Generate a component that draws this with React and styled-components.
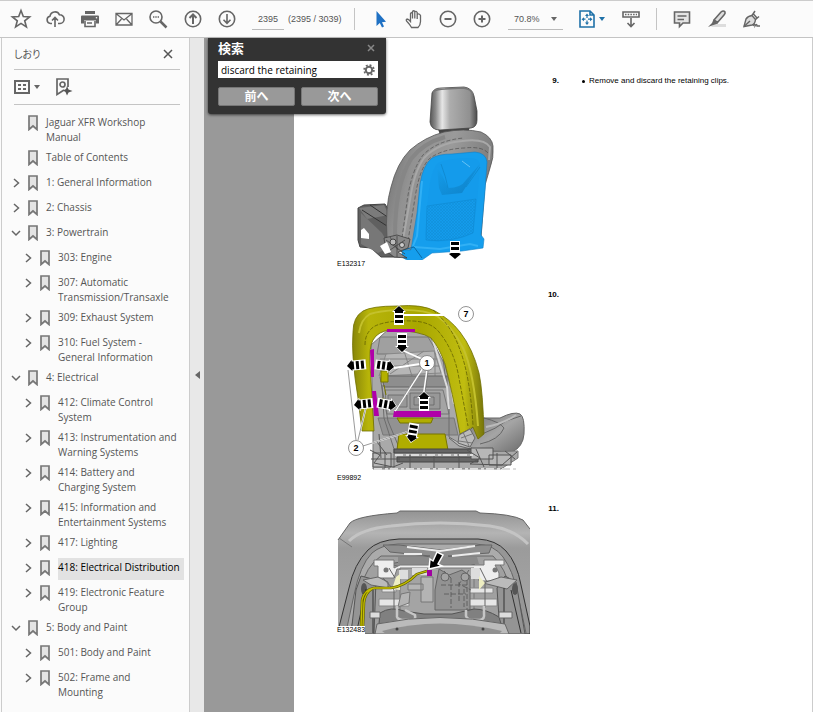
import { useState } from "react";
import styled, { createGlobalStyle, css } from "styled-components";

const bookmarks = [
  { label: "Jaguar XFR Workshop\nManual", level: 0 },
  { label: "Table of Contents", level: 0 },
  { label: "1: General Information", level: 0, state: "closed" },
  { label: "2: Chassis", level: 0, state: "closed" },
  { label: "3: Powertrain", level: 0, state: "open" },
  { label: "303: Engine", level: 1, state: "closed" },
  { label: "307: Automatic\nTransmission/Transaxle", level: 1, state: "closed" },
  { label: "309: Exhaust System", level: 1, state: "closed" },
  { label: "310: Fuel System -\nGeneral Information", level: 1, state: "closed" },
  { label: "4: Electrical", level: 0, state: "open" },
  { label: "412: Climate Control\nSystem", level: 1, state: "closed" },
  { label: "413: Instrumentation and\nWarning Systems", level: 1, state: "closed" },
  { label: "414: Battery and\nCharging System", level: 1, state: "closed" },
  { label: "415: Information and\nEntertainment Systems", level: 1, state: "closed" },
  { label: "417: Lighting", level: 1, state: "closed" },
  { label: "418: Electrical Distribution", level: 1, state: "closed", selected: true },
  { label: "419: Electronic Feature\nGroup", level: 1, state: "closed" },
  { label: "5: Body and Paint", level: 0, state: "open" },
  { label: "501: Body and Paint", level: 1, state: "closed" },
  { label: "502: Frame and\nMounting", level: 1, state: "closed" },
];

export default function App() {
  return (
    <>
      <GlobalStyle />
      <Window>
        <Toolbar />
        <Workspace>
          <Sidebar />
          <Splitter type="button" aria-label="Collapse panel">
            <svg width="5" height="8">
              <path d="M5 0V8L0 4Z" fill="#666" />
            </svg>
          </Splitter>
          <Viewer>
            <SearchPanel />
            <Page>
              <Step>
                <Figure>
                  <SeatRear />
                  <Caption>E132317</Caption>
                </Figure>
                <StepNumber>9.</StepNumber>
                <StepText>
                  <li>Remove and discard the retaining clips.</li>
                </StepText>
              </Step>
              <Step>
                <Figure>
                  <SeatFrame />
                  <Caption>E99892</Caption>
                </Figure>
                <StepNumber>10.</StepNumber>
              </Step>
              <Step>
                <Figure>
                  <SeatConnector />
                  <Caption $overlay>E132483</Caption>
                </Figure>
                <StepNumber>11.</StepNumber>
              </Step>
            </Page>
          </Viewer>
        </Workspace>
      </Window>
    </>
  );
}

function Toolbar() {
  const [page, setPage] = useState("2395");

  return (
    <Bar>
      <FileTools>
        <IconButton aria-label="Star">
          <Icon>
            <path d="M12 3.5L14.3 9.6L20.6 9.9L15.7 13.8L17.4 20L12 16.4L6.6 20L8.3 13.8L3.4 9.9L9.7 9.6Z" />
          </Icon>
        </IconButton>
        <IconButton aria-label="Upload">
          <Icon>
            <path d="M9 16.5H7.5A3.7 3.7 0 0 1 7 9.2A5 5 0 0 1 16.5 7.8A4.3 4.3 0 0 1 17 16.5H15M12 20V11M9 13.5L12 10.5L15 13.5" />
          </Icon>
        </IconButton>
        <IconButton aria-label="Print">
          <Icon>
            <path d="M7 4H17V7H7Z" fill="#666" stroke="none" />
            <path d="M4 8.5H20Q21 8.5 21 9.5V16.5H18V13.5H6V16.5H3V9.5Q3 8.5 4 8.5Z" fill="#666" stroke="none" />
            <path d="M7 14V19.5H17V14M9 16H14" />
            <circle cx="18.5" cy="10.7" r=".8" fill="#fff" stroke="none" />
          </Icon>
        </IconButton>
        <IconButton aria-label="Mail">
          <Icon>
            <path d="M4 6.5H20V18H4ZM4.500 7L12 13L19.500 7M4.500 17.500L9.500 12M19.500 17.500L14.500 12" strokeWidth="1.3" />
          </Icon>
        </IconButton>
        <IconButton aria-label="Find">
          <Icon>
            <circle cx="10" cy="10" r="6" />
            <path d="M14.500 14.500L20.500 20.500" strokeWidth="2.500" />
            <path d="M7 10H13" strokeDasharray="1.400 .9" />
          </Icon>
        </IconButton>
        <IconButton aria-label="Previous page">
          <Icon>
            <circle cx="12" cy="12" r="7.700" />
            <path d="M12 17V8M8.500 11L12 7.500L15.500 11" strokeWidth="2" />
          </Icon>
        </IconButton>
        <IconButton aria-label="Next page">
          <Icon>
            <circle cx="12" cy="12" r="7.700" />
            <path d="M12 7V16M8.500 12.800L12 16.300L15.500 12.800" />
          </Icon>
        </IconButton>
      </FileTools>
      <PageInput aria-label="Page number" value={page} onChange={(e) => setPage(e.target.value)} />
      <PageCount>(2395 / 3039)</PageCount>
      <Divider />
      <ViewTools>
        <IconButton aria-label="Select">
          <Icon>
            <path d="M8.500 4V19L11.800 16L14 20.500L16 19.500L14 15.200L18 14.800Z" fill="#1f71c4" stroke="none" />
          </Icon>
        </IconButton>
        <IconButton aria-label="Hand">
          <Icon>
            <path
              d="M9.500 20.500Q7.500 17 5 14.500Q3.500 12.500 5 12Q6.500 12 8.500 14.500V6.500Q9.500 5 10.500 6.500V11.500V4.500Q11.700 3 12.800 4.500V11.500V5Q14 3.500 15.200 5.500V12V7.500Q17 6 18.500 8.500V14.500Q18.500 18 16 20.500Z"
              strokeWidth="1.300"
            />
          </Icon>
        </IconButton>
        <IconButton aria-label="Zoom out">
          <Icon>
            <circle cx="12" cy="12" r="7.700" />
            <path d="M8.500 12H15.500" strokeWidth="2" />
          </Icon>
        </IconButton>
        <IconButton aria-label="Zoom in">
          <Icon>
            <circle cx="12" cy="12" r="7.700" />
            <path d="M8.500 12H15.500M12 8.500V15.500" strokeWidth="2" />
          </Icon>
        </IconButton>
      </ViewTools>
      <ZoomBox>
        <ZoomSelect aria-label="Zoom" defaultValue="70.8%">
          <option>70.8%</option>
          <option>100%</option>
        </ZoomSelect>
        <Caret />
      </ZoomBox>
      <FitButton aria-label="Fit page">
        <Icon $color="#1f71a8">
          <path d="M5 4H15L19 8V20H5ZM15 4V8H19" />
          <path d="M12 8.500V16M8 12.200H16" strokeWidth="1.200" strokeDasharray="2.500 2.500" />
          <path d="M12 6.500L14 9H10ZM12 18L14 15.500H10ZM6.500 12.200L9 10.200V14.200ZM17.500 12.200L15 10.200V14.200Z" fill="#1f71a8" stroke="none" />
        </Icon>
        <Caret $color="#1f71a8" />
      </FitButton>
      <IconButton aria-label="Scrolling">
        <Icon>
          <path d="M4 5H20V10H4Z" />
          <path d="M6 7.500H18" strokeDasharray="1.500 1.200" />
          <path d="M12 11V19.500M8.500 16L12 19.500L15.500 16" />
        </Icon>
      </IconButton>
      <Divider />
      <MarkupTools>
        <IconButton aria-label="Comment">
          <Icon>
            <path d="M4.500 5H19.500V16H13L9.500 19.500V16H4.500Z" fill="#e4e4e4" />
            <path d="M7.500 9H16.500M7.500 12.500H14" />
          </Icon>
        </IconButton>
        <IconButton aria-label="Highlight">
          <Icon>
            <path d="M9 17H21V20H6Z" fill="#ddd" stroke="none" />
            <path d="M9 13L16 5Q18.500 3 20 5Q20.500 6.500 19 8L12.500 15.500Z" fill="#ddd" />
            <path d="M8.500 12.500L13 16.500L8.500 18L3 20L7 16Z" fill="#666" stroke="none" />
          </Icon>
        </IconButton>
        <IconButton aria-label="Sign">
          <Icon>
            <path d="M4 19.500L6 12Q8 9 12 8.500L15.500 12.500Q15 17 12 18Z" fill="#ddd" strokeWidth="1.400" />
            <path d="M4 19.500L10 14M12 8.500L15 4M15.500 12.500L19 9.500M13 6.500L17 11" strokeWidth="1.500" />
            <path d="M13 19Q15 15 15 19Q17 16 17 19H20" strokeWidth="1.300" />
          </Icon>
        </IconButton>
      </MarkupTools>
    </Bar>
  );
}

function Sidebar() {
  return (
    <Panel>
      <PanelHeader>
        <PanelTitle>しおり</PanelTitle>
        <PlainButton aria-label="Close panel">
          <svg width="10" height="10" stroke="#555" strokeWidth="1.500">
            <path d="M1 1L9 9M9 1L1 9" />
          </svg>
        </PlainButton>
      </PanelHeader>
      <PanelTools>
        <PlainButton aria-label="Options">
          <svg width="16" height="14" fill="none" stroke="#666" strokeWidth="2">
            <path d="M1 1H15V13H1Z" />
            <path d="M4 5H7M9 5H12M4 9H7M9 9H12" />
          </svg>
          <Caret />
        </PlainButton>
        <PlainButton aria-label="Find bookmark">
          <svg width="17" height="18" fill="none" stroke="#666" strokeWidth="1.700">
            <path d="M8 12L1 16.500V1H12V9" />
            <circle cx="6.500" cy="6.500" r="2.500" />
            <path d="M11 8L12.500 11.500L16.500 13L12.500 14.500L11 17.500L9.500 14L7 12.500L10 11Z" fill="#555" stroke="none" />
          </svg>
        </PlainButton>
      </PanelTools>
      <Tree>
        {bookmarks.map((item) => (
          <TreeRow key={item.label} $level={item.level}>
            {item.state ? (
              <Toggle aria-label={item.state === "open" ? "Collapse" : "Expand"}>
                <svg width="10" height="12" fill="none" stroke="#666" strokeWidth="1.500">
                  <path d={item.state === "open" ? "M1 4L5 8L9 4" : "M3 2L7.500 6L3 10"} />
                </svg>
              </Toggle>
            ) : (
              <span />
            )}
            <svg width="10" height="16" fill="#e4e4e4" stroke="#777" strokeWidth="1.700">
              <path d="M1 1H9V14.500L5 11L1 14.500Z" />
            </svg>
            <TreeLink href="#" $selected={item.selected}>
              {item.label}
            </TreeLink>
          </TreeRow>
        ))}
      </Tree>
    </Panel>
  );
}

function SearchPanel() {
  const [query, setQuery] = useState("discard the retaining");

  return (
    <SearchBox>
      <SearchHeader>
        <label htmlFor="query">検索</label>
        <PlainButton type="button" aria-label="Close search">
          <svg width="8" height="8" stroke="#888" strokeWidth="1.500">
            <path d="M1 1L7 7M7 1L1 7" />
          </svg>
        </PlainButton>
      </SearchHeader>
      <SearchField>
        <input id="query" value={query} onChange={(e) => setQuery(e.target.value)} />
        <PlainButton type="button" aria-label="Search options">
          <svg width="12" height="12" fill="none" stroke="#666">
            <circle cx="6" cy="6" r="3.200" strokeWidth="2" />
            <circle cx="6" cy="6" r="4.900" strokeWidth="1.700" strokeDasharray="1.900 1.950" />
          </svg>
        </PlainButton>
      </SearchField>
      <SearchActions>
        <SearchButton>前へ</SearchButton>
        <SearchButton>次へ</SearchButton>
      </SearchActions>
    </SearchBox>
  );
}

function Caret({ $color = "#666" }) {
  return (
    <svg width="6" height="4">
      <path d="M0 0H6L3 4Z" fill={$color} />
    </svg>
  );
}

// Arrow pointing up with its tip at x,y and three bars behind it
function BarArrow({ x, y, turn = 0 }) {
  return (
    <g transform={`translate(${x} ${y}) rotate(${turn})`}>
      <path d="M0 -1L7 6H5V19H-5V6H-7Z" fill="#fff" />
      <path d="M0 0L5.500 5H4V7H-4V5H-5.500ZM-4 9H4V12H-4ZM-4 14H4V17H-4Z" fill="#000" />
    </g>
  );
}

function Callout({ x, y, children }) {
  return (
    <g>
      <circle cx={x} cy={y} r="7.500" fill="#fff" stroke="#777" strokeWidth=".8" />
      <text x={x} y={y + 3} textAnchor="middle" fontFamily="Liberation Sans, sans-serif" fontSize="9" fontWeight="bold">
        {children}
      </text>
    </g>
  );
}

function SeatRear() {
  return (
    <svg width="193" height="187" viewBox="337 73 193 187">
      <defs>
        <linearGradient id="rest">
          <stop offset="0" stopColor="#555" />
          <stop offset=".12" stopColor="#8c8c8c" />
          <stop offset=".26" stopColor="#e6e6e6" />
          <stop offset=".42" stopColor="#adadad" />
          <stop offset=".85" stopColor="#909090" />
          <stop offset="1" stopColor="#4b4b4b" />
        </linearGradient>
        <linearGradient id="shell" x1="0" y1="0" x2="1" y2=".3">
          <stop offset="0" stopColor="#6b6b6b" />
          <stop offset=".3" stopColor="#929292" />
          <stop offset=".6" stopColor="#9a9a9a" />
          <stop offset="1" stopColor="#7b7b7b" />
        </linearGradient>
        <linearGradient id="dip" x1="0" y1="0" x2="1" y2="1">
          <stop offset="0" stopColor="#159eed" />
          <stop offset="1" stopColor="#0d80c6" />
        </linearGradient>
        <pattern id="mesh" width="3" height="3" patternUnits="userSpaceOnUse">
          <path d="M0 0L3 3M3 0L0 3" stroke="#0e88cf" strokeWidth=".4" />
        </pattern>
      </defs>
      <path d="M437 126H470L468 134L440 135Z" fill="#444" />
      <path
        d="M432 93Q434 88 441 88L464 87Q472 88 474 96L477 111V120Q477 127 471 128L440 130Q431 130 430 122Z"
        fill="url(#rest)"
        stroke="#444"
        strokeWidth=".8"
      />
      <path d="M433 92Q437 89 445 89L463 88Q471 89 473 94" stroke="#777" strokeWidth="1.500" fill="none" />
      <path d="M358 208L364 205L385 204L392 215L391 240L400 257L381 257L371 248L360 247L358 240Z" fill="#606060" stroke="#444" />
      <path d="M359 208L384 205L389 215L367 219Z" fill="#7b7b7b" />
      <path d="M362 210L387 226M370 205L389 218" stroke="#333" />
      <path d="M361 213L382 233L390 247L378 253L361 244Z" fill="#777" />
      <path d="M361 230L364 228L369 234V239L361 238Z" fill="#fff" />
      <path
        d="M387 238Q385 207 391 187Q397 163 410 150Q425 137 444 132Q464 128 481 132Q492 137 493 146Q494 158 490 168L485 185L481 238L413 248L405 253Q390 248 387 238Z"
        fill="url(#shell)"
        stroke="#555"
        strokeWidth=".8"
      />
      <path
        d="M402 245L410 200Q414 172 424 158Q438 143 462 141Q484 138 490 147L489 160"
        fill="none"
        stroke="#a8a8a8"
        strokeWidth="2"
      />
      <path
        d="M407 247L415 198Q419 170 429 159Q442 149 464 148Q482 146 488 153M402 238L407 202Q411 171 423 155Q438 140 464 138"
        fill="none"
        stroke="#444"
        strokeWidth=".6"
        strokeDasharray="4 2"
      />
      <path d="M395 236Q395 185 411 159Q423 143 445 137" fill="none" stroke="#868686" strokeWidth="4" />
      <path
        d="M411 250L417 213L420 184Q423 165 432 158Q439 154 452 154L475 152Q486 153 487 162L485 191L481 235L484 239L483 248L462 251L432 253L422 260Q409 263 402 257V250Z"
        fill="#159eed"
        stroke="#0d80c8"
        strokeWidth=".6"
      />
      <path
        d="M425 235L428 198Q431 169 438 163Q448 158 470 158Q480 158 480 166L477 203L473 233Q452 244 428 241Z"
        fill="#149beb"
      />
      <path d="M427 206L476 199L473 233Q451 243 426 240Z" fill="url(#mesh)" stroke="#0f8bd4" strokeWidth=".7" />
      <path d="M437 167L439 188L442 195L462 193L480 164L466 180Q461 188 448 188L443 177Z" fill="url(#dip)" />
      <path d="M441 164Q446 177 448 188M466 187L480 167" fill="none" stroke="#0f86cc" strokeWidth=".8" />
      <path d="M462 161L470 167" stroke="#7ccdf8" strokeWidth=".8" />
      <path d="M422 181L417 236L413 246M414 247L440 249L470 244L478 246" fill="none" stroke="#31b0f5" strokeWidth="2" />
      <path d="M403 250L414 247L422 258" fill="none" stroke="#0869a5" />
      <path d="M384 238L397 235L410 239L408 248L398 252L407 258L394 257L386 251Z" fill="#888" stroke="#333" strokeWidth=".7" />
      <path d="M386 240L405 254M390 237L398 250M405 240L387 252M397 236V257" stroke="#444" strokeWidth=".8" />
      <circle cx="393" cy="242" r="3" fill="#bbb" stroke="#444" />
      <circle cx="402" cy="245" r="2.500" fill="#ccc" stroke="#444" />
      <path d="M380 246L387 242L391 252L385 254Z" fill="#fff" />
      <path d="M450 241H460V255H462L455 260L448 255H450Z" fill="#fff" />
      <path d="M451 242H459V245H451ZM451 247H459V250H451ZM451 253H459L461 254L455 259L449 254Z" />
    </svg>
  );
}

function SeatFrame() {
  return (
    <svg width="193" height="187" viewBox="337 287 193 187">
      <defs>
        <linearGradient id="foam" x1="0" y1="0" x2="1" y2="0">
          <stop offset="0" stopColor="#87850a" />
          <stop offset=".12" stopColor="#b7b409" />
          <stop offset=".5" stopColor="#a8a600" />
          <stop offset=".85" stopColor="#c0bd10" />
          <stop offset="1" stopColor="#77750a" />
        </linearGradient>
        <linearGradient id="cushion" x1="0" y1="0" x2="1" y2="1">
          <stop offset="0" stopColor="#777" />
          <stop offset=".5" stopColor="#a5a5a5" />
          <stop offset="1" stopColor="#6c6c6c" />
        </linearGradient>
      </defs>
      <path d="M482 418H500Q514 411 520 414Q525 417 524 434Q523 447 512 452L470 450V430Z" fill="url(#cushion)" stroke="#666" />
      <path d="M482 434Q496 429 506 421L521 416M484 418Q500 422 504 428Q499 440 480 444" fill="none" stroke="#666" />
      <path d="M486 427Q503 424 516 415" fill="none" stroke="#bbb" strokeWidth="2" />
      <path d="M371 345L390 328L428 332L445 365L455 405L461 432L474 452L518 451V458L501 469H373V420Z" fill="#a9a9a9" stroke="#777" />
      <path d="M380 337H428L438 354H377Z" fill="#a0a0a0" stroke="#777" />
      <path d="M386 354L434 351L441 373L379 376Z" fill="#b6b6b6" stroke="#888" />
      <path d="M380 359H438M379 366H440M390 374L424 351M404 351L412 376M435 350V378" stroke="#848484" />
      <path d="M382 376H447V387H384Z" fill="#8e8e8e" stroke="#666" />
      <path d="M385 390H443L449 414H387Z" fill="#a4a4a4" stroke="#777" />
      <path d="M388 395H407V407H388ZM410 393H440V409H410ZM414 397H434V405H414Z" fill="#989898" stroke="#666" strokeWidth=".8" />
      <path d="M378 418H454L458 435H383Z" fill="#929292" stroke="#777" />
      <path d="M382 385L384 418L394 449V468M380 377L388 421L398 445M443 359L449 404L449 437L461 444" fill="none" stroke="#6c6c6c" />
      <path d="M440 345L448 366L454 404M433 340L447 387L449 409" fill="none" stroke="#ddd" strokeWidth="2" />
      <path d="M381 371H388V382H381ZM384 385L386 395M382 398L390 402" fill="#b4b000" stroke="#777600" />
      <path
        d="M362 431L358 398Q351 356 353 332Q353 317 363 311Q372 306 397 306Q422 304 435 311Q450 319 460 332Q473 349 479 373Q483 392 484 434L478 439L473 427L460 434Q452 390 445 364Q439 347 431 338Q421 331 391 330Q378 331 373 340Q369 347 370 364L374 431Z"
        fill="url(#foam)"
        stroke="#706e00"
        strokeWidth=".8"
      />
      <path
        d="M359 333Q361 319 370 314Q379 311 397 310Q424 309 437 316Q452 326 463 348Q474 372 478 426"
        fill="none"
        stroke="#c4c12c"
        strokeWidth="2"
      />
      <path
        d="M365 345Q365 332 375 326Q388 320 413 321Q431 322 439 332Q453 349 458 373L468 426M433 310Q452 326 460 350Q470 376 473 425"
        fill="none"
        stroke="#585600"
        strokeDasharray="4 1.500"
        strokeWidth=".7"
      />
      <path d="M387 329H415V332H387ZM370 350L374 349V377H371ZM372 391H376L379 416H374ZM394 411H441V417H393Z" fill="#b000a8" />
      <path d="M397 418H433L431 423H400ZM399 434H445L448 450H397Z" fill="#b0ad00" stroke="#777500" />
      <path d="M459 435L470 429L475 438L470 447L458 443ZM449 438L459 446L471 449" fill="#bbb" stroke="#666" />
      <path d="M461 438L472 434M463 432L469 446M459 441L472 443" stroke="#777" />
      <path d="M394 449H474V453H394ZM397 457H478V462H397Z" fill="#666" stroke="#444" />
      <path d="M373 453H391V467H373ZM471 448H493V459H471ZM489 455H511V465H489Z" fill="#b7b7b7" stroke="#555" />
      <path
        d="M370 450L380 455L374 463L393 467L403 463M467 450L480 458L470 464L502 465L517 452M377 442L387 455M379 434L381 458M385 452V468M476 449L484 467M497 453V468M505 451L515 459M371 459H400M410 455V468M434 455V468M459 454V468"
        fill="none"
        stroke="#555"
      />
      <path d="M395 455H475M374 469H517" stroke="#ddd" strokeWidth="2" strokeDasharray="8 3 3 2" />
      <path d="M403 315H458M404 351L422 359M394 368L420 364M395 411L422 369M424 392L427 371M356 440L348 370M358 440L366 407M363 446L407 432" stroke="#fff" strokeWidth="1.800" />
      <path d="M356 440L348 370M358 440L366 407M363 446L407 432M395 410L421 369M425 392L428 371" stroke="#555" strokeWidth=".6" />
      <BarArrow x={399} y={306} />
      <BarArrow x={402} y={352} turn={180} />
      <BarArrow x={347} y={366} turn={-95} />
      <BarArrow x={394} y={367} turn={98} />
      <BarArrow x={354} y={405} turn={-96} />
      <BarArrow x={396} y={406} turn={100} />
      <BarArrow x={424} y={392} />
      <BarArrow x={411} y={442} turn={190} />
      <Callout x={466} y={314}>
        7
      </Callout>
      <Callout x={427} y={363}>
        1
      </Callout>
      <Callout x={356} y={448}>
        2
      </Callout>
    </svg>
  );
}

function SeatConnector() {
  return (
    <svg width="193" height="133" viewBox="337 501 193 133">
      <defs>
        <linearGradient id="pad" x1="0" y1="0" x2="0" y2="1">
          <stop offset="0" stopColor="#939393" />
          <stop offset=".18" stopColor="#b4b4b4" />
          <stop offset=".3" stopColor="#9b9b9b" />
          <stop offset="1" stopColor="#a9a9a9" />
        </linearGradient>
      </defs>
      <path d="M338 540L350 523Q357 516 397 513L400 511H476L480 513Q512 514 523 520L530 529V634H338Z" fill="url(#pad)" />
      <path d="M338 540L350 523Q357 516 397 513L400 511H476L480 513Q512 514 523 520L530 529" fill="none" stroke="#666" />
      <path d="M349 541Q361 529 391 526Q440 520 490 526Q513 529 528 544" fill="none" stroke="#c4c4c4" strokeWidth="3" />
      <path d="M339 538L352 547" stroke="#777" />
      <path
        d="M339 627L349 588Q354 564 368 550Q378 540 399 539H478Q496 540 506 551Q517 563 521 585L530 626V634H338Z"
        fill="#969696"
        stroke="#333"
      />
      <path
        d="M346 632L354 595Q360 565 372 553Q381 545 398 544H476Q495 545 503 557Q513 571 517 591L526 633"
        fill="#ababab"
        stroke="#666"
      />
      <path d="M350 634L360 590Q366 566 381 556H493Q506 569 510 589L519 634Z" fill="#a0a0a0" stroke="#666" />
      <path d="M383 545H399L441 550L481 545H492L489 553L448 556L475 564L466 567H400L390 564L430 556L390 552Z" fill="#8e8e8e" stroke="#666" />
      <path d="M407 547L440 551L475 546M404 554H422M452 556L480 553" stroke="#ececec" strokeWidth="2" fill="none" />
      <path d="M374 560H394V568L400 565H484V560H504V565H495L499 573V581H479L477 569H397L394 578H378V566H374Z" fill="#eee" stroke="#777" />
      <path d="M398 557H477L479 564H398Z" fill="#8a8a8a" />
      <circle cx="386" cy="570" r="2.500" fill="#777" />
      <circle cx="495" cy="570" r="2.500" fill="#777" />
      <path d="M400 568H474V615H400Z" fill="#a4a4a4" stroke="#777" />
      <path d="M399 570H408V579H399ZM412 568H427V575H412ZM471 568H480V579H471Z" fill="#ddd" />
      <path d="M382 587H396V592H382ZM466 588H493V593H466ZM379 599H409V606H379ZM468 599H497V606H468Z" fill="#e6e6e6" stroke="#888" />
      <path d="M401 594L410 592L409 603L398 607ZM421 577H433V602H421ZM408 584H423V590H408Z" fill="#b4b4b4" stroke="#777" />
      <path d="M439 569L449 575L462 570L470 576V610H435V590Z" fill="#929292" stroke="#666" />
      <path d="M444 571L451 578M469 570L459 584L471 590M441 585H469M444 594H466M451 578V608M459 582V603M464 589V607M467 573V612" stroke="#555" strokeWidth=".8" fill="none" strokeDasharray="5 2" />
      <circle cx="445" cy="577" r="4" fill="#a4a4a4" stroke="#666" />
      <circle cx="465" cy="577" r="4" fill="#a4a4a4" stroke="#666" />
      <path d="M361 576L376 580L374 634H351L356 590ZM505 576L516 582L525 634H500L497 588Z" fill="#949494" stroke="#555" />
      <path d="M363 580L378 577L388 582V588L371 585ZM483 583L501 577L517 580L507 589Z" fill="#bbb" stroke="#666" />
      <ellipse cx="364" cy="589" rx="3" ry="6" fill="#555" />
      <ellipse cx="515" cy="589" rx="3" ry="6" fill="#555" />
      <path d="M366 589L357 630M373 590V633M504 588V633M511 590L521 633" stroke="#333" />
      <path d="M389 568L395 578M480 568L487 582M398 615L386 624M478 615L494 624M383 578L394 590V610M485 582V608" stroke="#666" fill="none" />
      <path d="M380 613Q391 606 404 611L424 614H452L474 609Q486 609 499 617L504 634H378Z" fill="#808080" stroke="#555" />
      <path d="M397 606V615Q396 619 402 620H413Q416 619 415 615L405 610M466 610V616Q467 620 474 620H480Q485 619 484 614V606" fill="none" stroke="#c6c6c6" strokeWidth="2.500" />
      <path d="M377 624Q439 611 505 624L509 634H375Z" fill="#bbb" stroke="#666" />
      <path d="M382 631Q438 616 502 631L499 634H386Z" fill="#919191" />
      <circle cx="397" cy="629" r="1.500" fill="#444" />
      <circle cx="483" cy="629" r="1.500" fill="#444" />
      <path d="M370 612H380V618H370ZM499 612H512V618H499Z" fill="#ddd" stroke="#666" />
      <path d="M396 577L400 574V590L392 589ZM479 576L485 583L479 590Z" fill="#eeeec2" />
      <path d="M427 571L417 574Q405 586 391 588H374Q364 590 362 600L361 627M372 589Q365 593 364 603L363 627" fill="none" stroke="#605e00" strokeWidth="2.500" />
      <path d="M427 571L417 574Q405 586 391 588H374Q364 590 362 600L361 627M372 589Q365 593 364 603L363 627" fill="none" stroke="#c3bd00" strokeWidth="1.300" />
      <path d="M427 570H432V576H427Z" fill="#a000a0" />
      <path d="M437 552L443 555L438 564L442 566L429 569L430 559L433 561Z" fill="#000" stroke="#fff" strokeWidth="1.500" />
    </svg>
  );
}

const GlobalStyle = createGlobalStyle`
  * {
    box-sizing: border-box;
  }

  body {
    margin: 0;
    background: #fbfbfb;
    color: #555;
    font: 10px "Open Sans", "Noto Sans", "Noto Sans CJK JP", sans-serif;
  }

  button, input, select {
    font: inherit;
    color: inherit;
    border: none;
    padding: 0;
    background: none;
    outline: none;
  }

  svg {
    display: block;
    flex: none;
  }
`;

const Window = styled.div`
  min-height: 100vh;
  display: flex;
  flex-direction: column;
`;

const Bar = styled.header`
  height: 38px;
  display: flex;
  align-items: center;
  padding-left: 9px;
  border-top: 1px solid #ccc;
  border-bottom: 1px solid #c4c4c4;
  background: #fbfbfb;
  font-family: "Liberation Sans", sans-serif;
  font-size: 9px;
`;

const FileTools = styled.div`
  width: 230px;
  display: flex;
  justify-content: space-between;
  margin-right: 13px;
`;

const ViewTools = styled.div`
  display: flex;
  gap: 10px;
  margin-right: 14px;
`;

const MarkupTools = styled.div`
  display: flex;
  gap: 11px;
`;

const IconButton = styled.button`
  flex: none;
  width: 24px;
  height: 24px;
  cursor: pointer;
`;

const FitButton = styled.button`
  display: flex;
  align-items: center;
  height: 24px;
  margin: 0 14px 0 12px;
  cursor: pointer;
`;

const Icon = styled.svg.attrs({ viewBox: "0 0 24 24", width: 24, height: 24 })`
  fill: none;
  stroke: ${({ $color }) => $color || "#666"};
  stroke-width: 1.6px;
`;

const PageInput = styled.input`
  width: 32px;
  height: 22px;
  text-align: center;
  border-bottom: 1px solid #bbb;
`;

const PageCount = styled.span`
  width: 57px;
  padding-left: 4px;
  white-space: nowrap;
`;

const Divider = styled.div`
  width: 1px;
  height: 22px;
  margin: 0 13px;
  background: #c4c4c4;
`;

const ZoomBox = styled.div`
  width: 55px;
  height: 22px;
  display: flex;
  align-items: center;
  padding: 0 6px;
  border-bottom: 1px solid #bbb;
`;

const ZoomSelect = styled.select`
  flex: 1;
  min-width: 0;
  appearance: none;
`;

const Workspace = styled.div`
  flex: 1;
  display: flex;
`;

const Panel = styled.aside`
  flex: none;
  width: 188px;
  margin-left: 1px;
  padding: 0 5px 8px 12px;
  border-left: 1px solid #ccc;
  background: #fbfbfb;
`;

const PanelHeader = styled.div`
  height: 32px;
  display: flex;
  align-items: center;
  justify-content: space-between;
  margin-right: 4px;
  padding-right: 7px;
  border-bottom: 1px solid #c4c4c4;
`;

const PanelTitle = styled.h2`
  margin: 0;
  font-size: 10px;
  font-weight: normal;
  font-feature-settings: "palt";
`;

const PanelTools = styled.div`
  height: 35px;
  display: flex;
  align-items: center;
  gap: 16px;
  margin-right: 4px;
  border-bottom: 1px solid #c4c4c4;
`;

const PlainButton = styled.button`
  display: flex;
  align-items: center;
  gap: 4px;
  cursor: pointer;
`;

const Tree = styled.ul`
  list-style: none;
  margin: 5px 0 0;
  padding: 0;
`;

const TreeRow = styled.li`
  display: grid;
  grid-template-columns: 17px 18px 126px;
  align-items: start;
  margin-left: ${({ $level }) => $level * 12 - 3}px;
  padding-top: 3px;

  > svg {
    margin-top: 2px;
  }
`;

const Toggle = styled.button`
  height: 12px;
  margin-top: 4px;
  cursor: pointer;
`;

const TreeLink = styled.a`
  min-height: 22px;
  padding-top: 2px;
  line-height: 15px;
  color: #555;
  text-decoration: none;
  white-space: pre;

  ${({ $selected }) =>
    $selected &&
    css`
      color: #000;
      background: #e2e2e2;
    `}
`;

const Splitter = styled.button`
  flex: none;
  width: 15px;
  display: flex;
  align-items: center;
  justify-content: center;
  border-left: 1px solid #ccc;
  background: #e8e8e8;
`;

const Viewer = styled.main`
  flex: 1;
  position: relative;
  display: flex;
  padding-left: 90px;
  background: #999;
`;

const Page = styled.article`
  flex: 1;
  padding: 35px 0 0 43px;
  border-right: 1px solid #ccc;
  background: #fff;
  color: #000;
  font-family: "Liberation Sans", sans-serif;
  font-size: 8px;
  line-height: 16px;
`;

const Step = styled.section`
  min-height: 214px;
  display: grid;
  grid-template-columns: 193px 29px 1fr;
  align-items: start;

  &:last-child {
    min-height: 0;
  }
`;

const Figure = styled.figure`
  position: relative;
  margin: 0;
`;

const Caption = styled.figcaption`
  font-size: 7px;
  line-height: 8px;

  ${({ $overlay }) =>
    $overlay &&
    css`
      position: absolute;
      left: 0;
      bottom: 0;
      background: #fff;
    `}
`;

const StepNumber = styled.span`
  font-weight: bold;
  text-align: right;
`;

const StepText = styled.ul`
  list-style: none;
  margin: 0;
  padding-left: 23px;

  > li {
    display: flex;
    align-items: center;
    gap: 4px;
  }

  > li::before {
    content: "";
    width: 3px;
    height: 3px;
    border-radius: 50%;
    background: #000;
  }
`;

const SearchBox = styled.form`
  position: absolute;
  top: 0;
  left: 4px;
  width: 178px;
  padding: 0 8px 8px 10px;
  border-radius: 0 0 3px 3px;
  background: #333;
  box-shadow: 0 1px 3px rgba(0, 0, 0, 0.6);
`;

const SearchHeader = styled.div`
  height: 23px;
  display: flex;
  align-items: center;
  justify-content: space-between;
  padding: 0 3px 4px 0;
  color: #fff;
  font-size: 13px;
  font-weight: bold;
`;

const SearchField = styled.div`
  height: 17px;
  display: flex;
  align-items: center;
  padding: 0 3px;
  background: #fff;
  color: #000;

  > input {
    flex: 1;
    min-width: 0;
  }
`;

const SearchActions = styled.div`
  display: grid;
  grid-template-columns: 1fr 1fr;
  gap: 6px;
  margin-top: 9px;
`;

const SearchButton = styled.button.attrs({ type: "button" })`
  height: 19px;
  border: 1px solid #777;
  border-radius: 2px;
  background: #999;
  color: #fff;
  font-size: 12px;
  font-weight: bold;
  line-height: 17px;
`;
